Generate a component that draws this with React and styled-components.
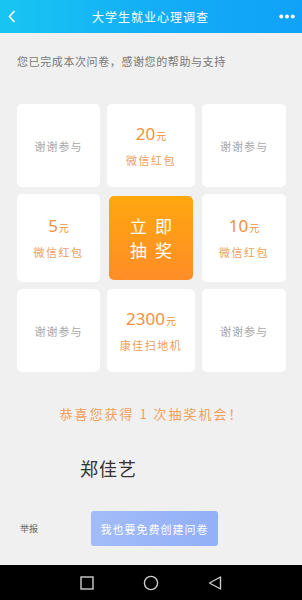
import React from 'react';
import styled, { createGlobalStyle } from 'styled-components';

const GlobalStyle = createGlobalStyle`
    html, body {
        margin: 0;
        padding: 0;
        background: #f0f0f0;
    }
    body {
        font-family: "Noto Sans CJK SC", "Noto Sans", sans-serif;
    }
`;

const Page = styled.div`
    width: 302px;
    height: 600px;
    display: flex;
    flex-direction: column;
    background: #f0f0f0;
    overflow: hidden;
`;

const Header = styled.div`
    height: 33px;
    flex: 0 0 33px;
    display: flex;
    align-items: center;
    justify-content: space-between;
    padding: 0 7px 0 8px;
    background: linear-gradient(90deg, #18c6f2 0%, #13acf6 55%, #10a2f8 100%);
    box-sizing: border-box;
`;

const HeaderTitle = styled.div`
    color: #ffffff;
    font-size: 12px;
    letter-spacing: 1px;
    margin-left: 6px;
`;

const Body = styled.div`
    flex: 1;
    display: flex;
    flex-direction: column;
    padding: 0 16px 0 17px;
`;

const Intro = styled.div`
    margin-top: 20px;
    color: #777777;
    font-size: 11px;
    letter-spacing: 0.6px;
    line-height: 16px;
`;

const Grid = styled.div`
    margin-top: 35px;
    display: grid;
    grid-template-columns: 83px 88px 84px;
    grid-template-rows: 83px 88px 83px;
    column-gap: 7px;
    row-gap: 7px;
`;

const Cell = styled.div`
    background: #ffffff;
    border-radius: 5px;
    display: flex;
    flex-direction: column;
    align-items: center;
    justify-content: center;
    gap: 6px;
`;

const DrawCell = styled.div`
    margin: 2px 2px;
    border-radius: 5px;
    background: linear-gradient(180deg, #ffa70e 0%, #ff8d28 100%);
    display: flex;
    flex-direction: column;
    align-items: center;
    justify-content: center;
    color: #ffffff;
    font-size: 17px;
    letter-spacing: 8px;
    line-height: 24px;
    padding-left: 8px;
`;

const Thanks = styled.div`
    color: #a8a8a8;
    font-size: 11px;
    letter-spacing: 1px;
`;

const Amount = styled.div`
    color: #f0913c;
    font-size: 17px;
    line-height: 20px;
    font-family: "Noto Sans", "Noto Sans CJK SC", sans-serif;
`;

const Unit = styled.span`
    font-size: 10px;
    margin-left: 1px;
    font-family: "Noto Sans CJK SC", sans-serif;
`;

const PrizeName = styled.div`
    color: #eaa05a;
    font-size: 11px;
    letter-spacing: 1.5px;
`;

const Congrats = styled.div`
    margin-top: 32px;
    text-align: center;
    color: #f0a05c;
    font-size: 13px;
    letter-spacing: 2px;
`;

const Name = styled.div`
    margin-top: 32px;
    margin-left: 63px;
    color: #333333;
    font-size: 18px;
    letter-spacing: 1px;
`;

const FooterRow = styled.div`
    margin-top: 30px;
    display: flex;
    align-items: center;
`;

const Report = styled.div`
    width: 71px;
    padding-left: 3px;
    color: #666666;
    font-size: 9px;
`;

const CreateButton = styled.div`
    width: 127px;
    height: 35px;
    border-radius: 3px;
    background: linear-gradient(90deg, #a3bcf9 0%, #92b0f8 100%);
    color: #ffffff;
    font-size: 11px;
    letter-spacing: 1px;
    display: flex;
    align-items: center;
    justify-content: center;
`;

const NavBar = styled.div`
    height: 35px;
    flex: 0 0 35px;
    background: #000000;
    display: flex;
    align-items: center;
    justify-content: center;
    gap: 49px;
`;

const Prize = ({ amount, name }) => (
    <Cell>
        <Amount>
            {amount}
            <Unit>元</Unit>
        </Amount>
        <PrizeName>{name}</PrizeName>
    </Cell>
);

const ThanksCell = () => (
    <Cell>
        <Thanks>谢谢参与</Thanks>
    </Cell>
);

export default function App() {
    return (
        <Page>
            <GlobalStyle />
            <Header>
                <svg width="8" height="13" viewBox="0 0 8 13">
                    <path d="M6.5 1 L1.5 6.5 L6.5 12" fill="none" stroke="#ffffff" strokeWidth="1.6" />
                </svg>
                <HeaderTitle>大学生就业心理调查</HeaderTitle>
                <svg width="16" height="5" viewBox="0 0 16 5">
                    <circle cx="2.3" cy="2.5" r="2" fill="#ffffff" />
                    <circle cx="8" cy="2.5" r="2" fill="#ffffff" />
                    <circle cx="13.7" cy="2.5" r="2" fill="#ffffff" />
                </svg>
            </Header>
            <Body>
                <Intro>您已完成本次问卷，感谢您的帮助与支持</Intro>
                <Grid>
                    <ThanksCell />
                    <Prize amount="20" name="微信红包" />
                    <ThanksCell />
                    <Prize amount="5" name="微信红包" />
                    <DrawCell>
                        <div>立即</div>
                        <div>抽奖</div>
                    </DrawCell>
                    <Prize amount="10" name="微信红包" />
                    <ThanksCell />
                    <Prize amount="2300" name="康佳扫地机" />
                    <ThanksCell />
                </Grid>
                <Congrats>恭喜您获得 1 次抽奖机会！</Congrats>
                <Name>郑佳艺</Name>
                <FooterRow>
                    <Report>举报</Report>
                    <CreateButton>我也要免费创建问卷</CreateButton>
                </FooterRow>
            </Body>
            <NavBar>
                <svg width="14" height="14" viewBox="0 0 14 14">
                    <rect x="1" y="1" width="12" height="12" fill="none" stroke="#cccccc" strokeWidth="1.4" />
                </svg>
                <svg width="16" height="16" viewBox="0 0 16 16">
                    <circle cx="8" cy="8" r="6.6" fill="none" stroke="#cccccc" strokeWidth="1.4" />
                </svg>
                <svg width="14" height="14" viewBox="0 0 14 14">
                    <path d="M12.5 1 L1.5 7 L12.5 13 Z" fill="none" stroke="#cccccc" strokeWidth="1.4" strokeLinejoin="round" />
                </svg>
            </NavBar>
        </Page>
    );
}
